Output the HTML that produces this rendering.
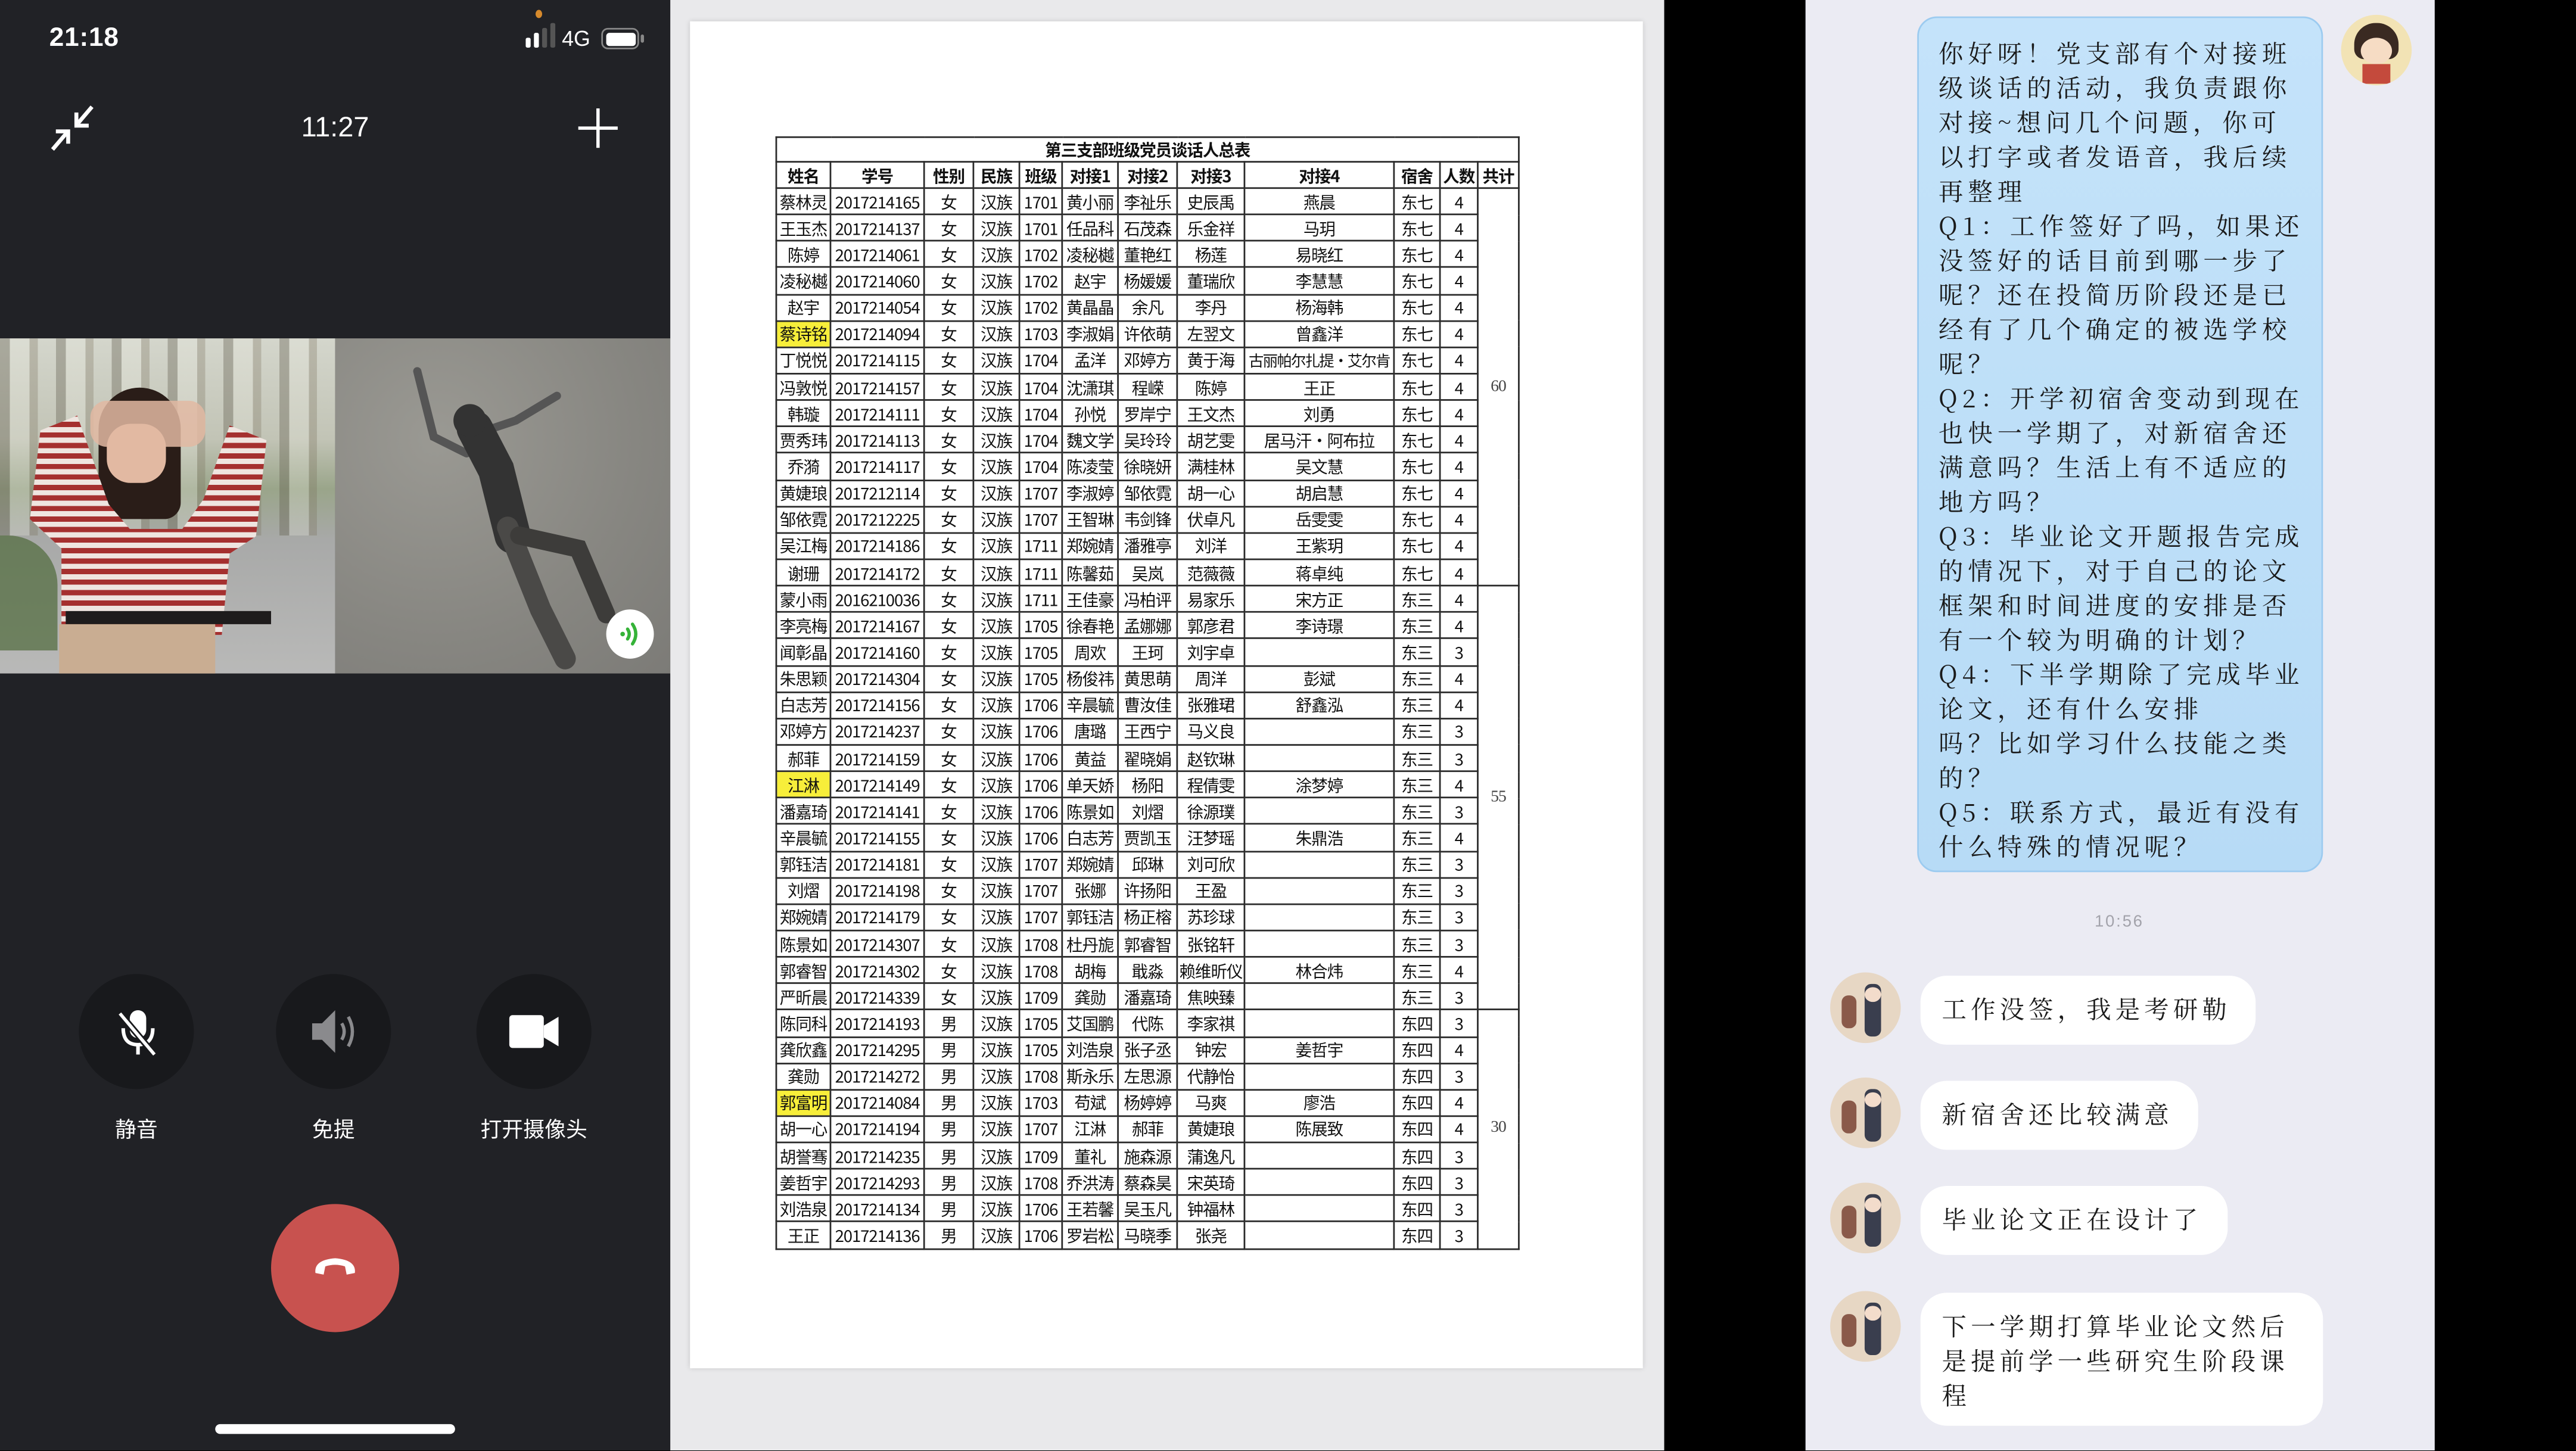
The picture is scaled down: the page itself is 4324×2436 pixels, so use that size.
<!DOCTYPE html>
<html><head><meta charset="utf-8">
<style>
*{margin:0;padding:0;box-sizing:border-box}
html,body{width:4324px;height:2436px;overflow:hidden;background:#000}
#w{position:absolute;left:0;top:0;width:1568px;height:883px;transform:scale(2.75765);transform-origin:0 0;font-family:"Liberation Sans","Noto Sans CJK SC",sans-serif;overflow:hidden;background:#000}
.ab{position:absolute}
#phone{left:0;top:0;width:408px;height:883px;background:#212226;color:#fff}
#mid{left:408px;top:0;width:605px;height:883px;background:#e9e9eb}
#paper{left:420px;top:13px;width:580px;height:820px;background:#fff;box-shadow:0 0 3px rgba(0,0,0,.15)}
table{position:absolute;left:472px;top:83px;width:452px;border-collapse:collapse;table-layout:fixed;font-family:"Noto Sans CJK SC",sans-serif;color:#111}
td{border:1px solid #2a2a2a;padding:0;text-align:center;font-size:10px;line-height:14px;height:16.15px;white-space:nowrap;overflow:hidden;letter-spacing:-0.4px}
tr.t td{height:15px;font-weight:bold;font-size:10px}
tr.h td{height:16px;font-weight:bold;font-size:10px}
td.y{background:#f7ee3a}
td.s{font-family:"Liberation Serif",serif;font-size:10px;color:#444;border-top:1px solid #2a2a2a}
#chat{left:1099px;top:0;width:383px;height:883px;background:#ebebf3}
.k{font-family:"Noto Serif CJK SC","Noto Sans CJK SC",serif;color:#1a1a1a}
.bub{background:#fff;border-radius:16px;position:absolute;left:1169px;font-size:15px;letter-spacing:2.6px;line-height:21px;padding:0 13px}
.av{position:absolute;left:1114px;width:43px;height:43px;border-radius:50%;background:#e7d7c4;overflow:hidden}
.av i{position:absolute;display:block}
.btn{position:absolute;width:70px;height:70px;border-radius:50%;background:#18191c;top:593px}
.lbl{position:absolute;top:677px;font-size:13px;width:120px;text-align:center;color:#fff}
</style></head><body><div id="w">

<div id="phone" class="ab">
  <div class="ab" style="left:30px;top:15px;font-size:16px;font-weight:bold;letter-spacing:.3px">21:18</div>
  <div class="ab" style="left:326px;top:6px;width:4px;height:5px;border-radius:50%;background:#d68a2c"></div>
  <div class="ab" style="left:320px;top:23px;width:3px;height:6px;background:#fff;border-radius:1px"></div>
  <div class="ab" style="left:325px;top:20px;width:3px;height:9px;background:#fff;border-radius:1px"></div>
  <div class="ab" style="left:330px;top:17px;width:3px;height:12px;background:#555;border-radius:1px"></div>
  <div class="ab" style="left:335px;top:14px;width:3px;height:15px;background:#555;border-radius:1px"></div>
  <div class="ab" style="left:342px;top:16px;font-size:13px">4G</div>
  <div class="ab" style="left:366px;top:17px;width:23px;height:13px;border:1.5px solid #888;border-radius:4px"></div>
  <div class="ab" style="left:368.5px;top:19.5px;width:18px;height:8px;background:#fff;border-radius:2px"></div>
  <div class="ab" style="left:390px;top:21px;width:2px;height:5px;background:#888;border-radius:1px"></div>
  <svg class="ab" style="left:0;top:0" width="80" height="100" viewBox="0 0 80 100"><g stroke="#fff" stroke-width="2.4" fill="none" stroke-linecap="butt"><path d="M56 65 L47.5 75"/><path d="M46.5 68.5 V76.5 H54"/><path d="M32 91 L40.5 81"/><path d="M34 80 H41.5 V87.5"/></g></svg>
  <div class="ab" style="left:0;width:408px;top:68px;text-align:center;font-size:17px">11:27</div>
  <div class="ab" style="left:352px;top:77px;width:24px;height:2.4px;background:#fff"></div>
  <div class="ab" style="left:362.8px;top:66px;width:2.4px;height:24px;background:#fff"></div>

  <!-- left video -->
  <div class="ab" style="left:0;top:206px;width:204px;height:204px;overflow:hidden;background:linear-gradient(180deg,#d4d6cc 0%,#c2c4b6 30%,#9aa58a 45%,#a8a9a8 60%,#b9b9b8 100%)">
    <div class="ab" style="left:0;top:0;width:204px;height:120px;background:repeating-linear-gradient(90deg,rgba(90,85,70,.35) 0 6px,rgba(240,240,230,.25) 6px 18px,rgba(120,110,90,.3) 18px 23px,transparent 23px 34px)"></div>
    <div class="ab" style="left:0;top:120px;width:35px;height:70px;background:#4e6a3a;opacity:.7;border-radius:0 30px 0 0"></div>
    <div class="ab" style="left:60px;top:30px;width:50px;height:80px;background:#2a1d18;border-radius:25px 25px 10px 10px"></div>
    <div class="ab" style="left:65px;top:52px;width:36px;height:36px;background:#e2b9a2;border-radius:40%"></div>
    <div class="ab" style="left:15px;top:38px;width:160px;height:150px;background:repeating-linear-gradient(180deg,#a5302f 0 3.2px,#efe5e0 3.2px 6.4px);clip-path:polygon(6% 12%,20% 6%,32% 42%,40% 52%,60% 52%,68% 40%,78% 10%,92% 16%,88% 55%,78% 62%,75% 95%,14% 95%,14% 60%,2% 48%)"></div>
    <div class="ab" style="left:55px;top:38px;width:70px;height:28px;background:#e2b9a2;border-radius:10px;opacity:.85"></div>
    <div class="ab" style="left:40px;top:166px;width:125px;height:8px;background:#1e1c1c"></div>
    <div class="ab" style="left:36px;top:174px;width:95px;height:40px;background:#c9ad92"></div>
  </div>
  <!-- right video -->
  <div class="ab" style="left:204px;top:206px;width:204px;height:204px;overflow:hidden;background:radial-gradient(ellipse at 30% 30%,#9a9993,#878681 60%,#7c7b77)">
    <svg class="ab" style="left:0;top:0" width="204" height="204" viewBox="0 0 204 204"><g fill="none" stroke-linecap="round"><path d="M50 20 L60 60 L80 70" stroke="#555" stroke-width="5"/><path d="M135 35 L110 50 L95 55" stroke="#555" stroke-width="5"/><path d="M85 55 L98 80 L108 120" stroke-width="22" stroke="#333"/><path d="M105 115 L125 165 L140 195" stroke-width="13" stroke="#4a4947"/><path d="M112 120 L148 128 L165 168" stroke-width="11" stroke="#3d3c3a"/></g><circle cx="82" cy="50" r="10" fill="#333"/></svg>
  </div>
  <div class="ab" style="left:369px;top:371px;width:29px;height:30px;border-radius:50%;background:#fff"></div>
  <svg class="ab" style="left:374px;top:376px" width="20" height="20" viewBox="0 0 20 20"><g fill="none" stroke="#35b338" stroke-width="2" stroke-linecap="round"><path d="M8 7 q2 3 0 6"/><path d="M11 4 q4 6 0 12"/></g><circle cx="5" cy="10" r="1.4" fill="#35b338"/></svg>

  <div class="btn" style="left:48px"></div>
  <div class="btn" style="left:168px"></div>
  <div class="btn" style="left:290px"></div>
  <svg class="ab" style="left:70px;top:614px" width="28" height="30" viewBox="0 0 28 30"><rect x="9" y="1" width="10" height="17" rx="5" fill="#fff"/><path d="M5 12 q0 10 9 10 q9 0 9 -10" fill="none" stroke="#fff" stroke-width="2.2"/><path d="M14 22 v6" stroke="#fff" stroke-width="2.2"/><path d="M3 3 L24 28" stroke="#18191c" stroke-width="4"/><path d="M3 3 L24 28" stroke="#fff" stroke-width="2"/></svg>
  <svg class="ab" style="left:188px;top:614px" width="30" height="28" viewBox="0 0 30 28"><path d="M2 9 h6 l8 -8 v26 l-8 -8 h-6z" fill="#8a8a8d"/><path d="M20 9 q3 5 0 10" fill="none" stroke="#8a8a8d" stroke-width="2"/><path d="M24 5 q5 9 0 18" fill="none" stroke="#8a8a8d" stroke-width="2"/></svg>
  <div class="ab" style="left:310px;top:618px;width:21px;height:20px;background:#fff;border-radius:2px"></div>
  <div class="ab" style="left:331px;top:619px;width:9px;height:18px;background:#fff;clip-path:polygon(0 30%,100% 0,100% 100%,0 70%)"></div>
  <div class="lbl" style="left:23px">静音</div>
  <div class="lbl" style="left:143px">免提</div>
  <div class="lbl" style="left:265px">打开摄像头</div>
  <div class="ab" style="left:165px;top:733px;width:78px;height:78px;border-radius:50%;background:#c8524f"></div>
  <svg class="ab" style="left:190px;top:762px" width="28" height="16" viewBox="0 0 28 16"><path d="M2 13 Q1 5 14 4 Q27 5 26 13 L21 14 L20 9 Q14 7 8 9 L7 14z" fill="#fff"/></svg>
  <div class="ab" style="left:131px;top:867px;width:146px;height:6px;border-radius:3px;background:#fff"></div>
</div>

<div id="mid" class="ab"></div>
<div id="paper" class="ab"></div>
<table>
<colgroup><col style="width:33px"><col style="width:57px"><col style="width:30px"><col style="width:28px"><col style="width:26px"><col style="width:34px"><col style="width:36px"><col style="width:41px"><col style="width:91px"><col style="width:28px"><col style="width:23px"><col style="width:25px"></colgroup>
<tr class="t"><td colspan="12">第三支部班级党员谈话人总表</td></tr>
<tr class="h"><td>姓名</td><td>学号</td><td>性别</td><td>民族</td><td>班级</td><td>对接1</td><td>对接2</td><td>对接3</td><td>对接4</td><td>宿舍</td><td>人数</td><td>共计</td></tr>
<tr><td>蔡林灵</td><td>2017214165</td><td>女</td><td>汉族</td><td>1701</td><td>黄小丽</td><td>李祉乐</td><td>史辰禹</td><td>燕晨</td><td>东七</td><td>4</td><td class="s" rowspan="15">60</td></tr>
<tr><td>王玉杰</td><td>2017214137</td><td>女</td><td>汉族</td><td>1701</td><td>任品科</td><td>石茂森</td><td>乐金祥</td><td>马玥</td><td>东七</td><td>4</td></tr>
<tr><td>陈婷</td><td>2017214061</td><td>女</td><td>汉族</td><td>1702</td><td>凌秘樾</td><td>董艳红</td><td>杨莲</td><td>易晓红</td><td>东七</td><td>4</td></tr>
<tr><td>凌秘樾</td><td>2017214060</td><td>女</td><td>汉族</td><td>1702</td><td>赵宇</td><td>杨媛媛</td><td>董瑞欣</td><td>李慧慧</td><td>东七</td><td>4</td></tr>
<tr><td>赵宇</td><td>2017214054</td><td>女</td><td>汉族</td><td>1702</td><td>黄晶晶</td><td>余凡</td><td>李丹</td><td>杨海韩</td><td>东七</td><td>4</td></tr>
<tr><td class="y">蔡诗铭</td><td>2017214094</td><td>女</td><td>汉族</td><td>1703</td><td>李淑娟</td><td>许依萌</td><td>左翌文</td><td>曾鑫洋</td><td>东七</td><td>4</td></tr>
<tr><td>丁悦悦</td><td>2017214115</td><td>女</td><td>汉族</td><td>1704</td><td>孟洋</td><td>邓婷方</td><td>黄于海</td><td style="font-size:9.2px;letter-spacing:-0.6px">古丽帕尔扎提·艾尔肯</td><td>东七</td><td>4</td></tr>
<tr><td>冯敦悦</td><td>2017214157</td><td>女</td><td>汉族</td><td>1704</td><td>沈潇琪</td><td>程嵘</td><td>陈婷</td><td>王正</td><td>东七</td><td>4</td></tr>
<tr><td>韩璇</td><td>2017214111</td><td>女</td><td>汉族</td><td>1704</td><td>孙悦</td><td>罗岸宁</td><td>王文杰</td><td>刘勇</td><td>东七</td><td>4</td></tr>
<tr><td>贾秀玮</td><td>2017214113</td><td>女</td><td>汉族</td><td>1704</td><td>魏文学</td><td>吴玲玲</td><td>胡艺雯</td><td>居马汗·阿布拉</td><td>东七</td><td>4</td></tr>
<tr><td>乔漪</td><td>2017214117</td><td>女</td><td>汉族</td><td>1704</td><td>陈凌莹</td><td>徐晓妍</td><td>满桂林</td><td>吴文慧</td><td>东七</td><td>4</td></tr>
<tr><td>黄婕琅</td><td>2017212114</td><td>女</td><td>汉族</td><td>1707</td><td>李淑婷</td><td>邹依霓</td><td>胡一心</td><td>胡启慧</td><td>东七</td><td>4</td></tr>
<tr><td>邹依霓</td><td>2017212225</td><td>女</td><td>汉族</td><td>1707</td><td>王智琳</td><td>韦剑锋</td><td>伏卓凡</td><td>岳雯雯</td><td>东七</td><td>4</td></tr>
<tr><td>吴江梅</td><td>2017214186</td><td>女</td><td>汉族</td><td>1711</td><td>郑婉婧</td><td>潘雅亭</td><td>刘洋</td><td>王紫玥</td><td>东七</td><td>4</td></tr>
<tr><td>谢珊</td><td>2017214172</td><td>女</td><td>汉族</td><td>1711</td><td>陈馨茹</td><td>吴岚</td><td>范薇薇</td><td>蒋卓纯</td><td>东七</td><td>4</td></tr>
<tr><td>蒙小雨</td><td>2016210036</td><td>女</td><td>汉族</td><td>1711</td><td>王佳豪</td><td>冯柏评</td><td>易家乐</td><td>宋方正</td><td>东三</td><td>4</td><td class="s" rowspan="16">55</td></tr>
<tr><td>李亮梅</td><td>2017214167</td><td>女</td><td>汉族</td><td>1705</td><td>徐春艳</td><td>孟娜娜</td><td>郭彦君</td><td>李诗璟</td><td>东三</td><td>4</td></tr>
<tr><td>闻彰晶</td><td>2017214160</td><td>女</td><td>汉族</td><td>1705</td><td>周欢</td><td>王珂</td><td>刘宇卓</td><td></td><td>东三</td><td>3</td></tr>
<tr><td>朱思颖</td><td>2017214304</td><td>女</td><td>汉族</td><td>1705</td><td>杨俊祎</td><td>黄思萌</td><td>周洋</td><td>彭斌</td><td>东三</td><td>4</td></tr>
<tr><td>白志芳</td><td>2017214156</td><td>女</td><td>汉族</td><td>1706</td><td>辛晨毓</td><td>曹汝佳</td><td>张雅珺</td><td>舒鑫泓</td><td>东三</td><td>4</td></tr>
<tr><td>邓婷方</td><td>2017214237</td><td>女</td><td>汉族</td><td>1706</td><td>唐璐</td><td>王西宁</td><td>马义良</td><td></td><td>东三</td><td>3</td></tr>
<tr><td>郝菲</td><td>2017214159</td><td>女</td><td>汉族</td><td>1706</td><td>黄益</td><td>翟晓娟</td><td>赵钦琳</td><td></td><td>东三</td><td>3</td></tr>
<tr><td class="y">江淋</td><td>2017214149</td><td>女</td><td>汉族</td><td>1706</td><td>单天娇</td><td>杨阳</td><td>程倩雯</td><td>涂梦婷</td><td>东三</td><td>4</td></tr>
<tr><td>潘嘉琦</td><td>2017214141</td><td>女</td><td>汉族</td><td>1706</td><td>陈景如</td><td>刘熠</td><td>徐源璞</td><td></td><td>东三</td><td>3</td></tr>
<tr><td>辛晨毓</td><td>2017214155</td><td>女</td><td>汉族</td><td>1706</td><td>白志芳</td><td>贾凯玉</td><td>汪梦瑶</td><td>朱鼎浩</td><td>东三</td><td>4</td></tr>
<tr><td>郭钰洁</td><td>2017214181</td><td>女</td><td>汉族</td><td>1707</td><td>郑婉婧</td><td>邱琳</td><td>刘可欣</td><td></td><td>东三</td><td>3</td></tr>
<tr><td>刘熠</td><td>2017214198</td><td>女</td><td>汉族</td><td>1707</td><td>张娜</td><td>许扬阳</td><td>王盈</td><td></td><td>东三</td><td>3</td></tr>
<tr><td>郑婉婧</td><td>2017214179</td><td>女</td><td>汉族</td><td>1707</td><td>郭钰洁</td><td>杨正榕</td><td>苏珍球</td><td></td><td>东三</td><td>3</td></tr>
<tr><td>陈景如</td><td>2017214307</td><td>女</td><td>汉族</td><td>1708</td><td>杜丹旎</td><td>郭睿智</td><td>张铭轩</td><td></td><td>东三</td><td>3</td></tr>
<tr><td>郭睿智</td><td>2017214302</td><td>女</td><td>汉族</td><td>1708</td><td>胡梅</td><td>戢淼</td><td>赖维昕仪</td><td>林合炜</td><td>东三</td><td>4</td></tr>
<tr><td>严昕晨</td><td>2017214339</td><td>女</td><td>汉族</td><td>1709</td><td>龚勋</td><td>潘嘉琦</td><td>焦映臻</td><td></td><td>东三</td><td>3</td></tr>
<tr><td>陈同科</td><td>2017214193</td><td>男</td><td>汉族</td><td>1705</td><td>艾国鹏</td><td>代陈</td><td>李家祺</td><td></td><td>东四</td><td>3</td><td class="s" rowspan="9">30</td></tr>
<tr><td>龚欣鑫</td><td>2017214295</td><td>男</td><td>汉族</td><td>1705</td><td>刘浩泉</td><td>张子丞</td><td>钟宏</td><td>姜哲宇</td><td>东四</td><td>4</td></tr>
<tr><td>龚勋</td><td>2017214272</td><td>男</td><td>汉族</td><td>1708</td><td>斯永乐</td><td>左思源</td><td>代静怡</td><td></td><td>东四</td><td>3</td></tr>
<tr><td class="y">郭富明</td><td>2017214084</td><td>男</td><td>汉族</td><td>1703</td><td>苟斌</td><td>杨婷婷</td><td>马爽</td><td>廖浩</td><td>东四</td><td>4</td></tr>
<tr><td>胡一心</td><td>2017214194</td><td>男</td><td>汉族</td><td>1707</td><td>江淋</td><td>郝菲</td><td>黄婕琅</td><td>陈展致</td><td>东四</td><td>4</td></tr>
<tr><td>胡誉骞</td><td>2017214235</td><td>男</td><td>汉族</td><td>1709</td><td>董礼</td><td>施森源</td><td>蒲逸凡</td><td></td><td>东四</td><td>3</td></tr>
<tr><td>姜哲宇</td><td>2017214293</td><td>男</td><td>汉族</td><td>1708</td><td>乔洪涛</td><td>蔡森昊</td><td>宋英琦</td><td></td><td>东四</td><td>3</td></tr>
<tr><td>刘浩泉</td><td>2017214134</td><td>男</td><td>汉族</td><td>1706</td><td>王若馨</td><td>吴玉凡</td><td>钟福林</td><td></td><td>东四</td><td>3</td></tr>
<tr><td>王正</td><td>2017214136</td><td>男</td><td>汉族</td><td>1706</td><td>罗岩松</td><td>马晓季</td><td>张尧</td><td></td><td>东四</td><td>3</td></tr>
</table>

<div id="chat" class="ab"></div>
<div class="ab k" style="left:1167px;top:10px;width:247px;height:521px;border-radius:12px;background:linear-gradient(180deg,#c4e3fa,#b7dbf6);border:1.5px solid #9ccbf0;padding:11px 0 0 12px;font-size:15px;line-height:21px;letter-spacing:2.9px;white-space:nowrap">你好呀！党支部有个对接班<br>级谈话的活动，我负责跟你<br>对接~想问几个问题，你可<br>以打字或者发语音，我后续<br>再整理<br>Q1：工作签好了吗，如果还<br>没签好的话目前到哪一步了<br>呢？还在投简历阶段还是已<br>经有了几个确定的被选学校<br>呢？<br>Q2：开学初宿舍变动到现在<br>也快一学期了，对新宿舍还<br>满意吗？生活上有不适应的<br>地方吗？<br>Q3：毕业论文开题报告完成<br>的情况下，对于自己的论文<br>框架和时间进度的安排是否<br>有一个较为明确的计划？<br>Q4：下半学期除了完成毕业<br>论文，还有什么安排<br>吗？比如学习什么技能之类<br>的？<br>Q5：联系方式，最近有没有<br>什么特殊的情况呢？</div>
<div class="ab" style="left:1425px;top:9px;width:43px;height:43px;border-radius:50%;background:#f2e3b5;overflow:hidden"><div class="ab" style="left:8px;top:5px;width:27px;height:22px;border-radius:13px 13px 6px 6px;background:#3a2a22"></div><div class="ab" style="left:12px;top:14px;width:19px;height:16px;border-radius:50%;background:#f6dcc4"></div><div class="ab" style="left:13px;top:30px;width:17px;height:12px;background:#c44a3c"></div></div>
<div class="ab" style="left:1260px;top:556px;width:60px;text-align:center;font-size:10px;color:#a3a3ab;letter-spacing:1px">10:56</div>

<div class="bub k" style="top:594px;height:42px;width:204px;padding-top:10px">工作没签，我是考研勒</div>
<div class="bub k" style="top:658px;height:42px;width:169px;padding-top:10px">新宿舍还比较满意</div>
<div class="bub k" style="top:722px;height:42px;width:187px;padding-top:10px">毕业论文正在设计了</div>
<div class="bub k" style="top:787px;height:81px;width:245px;padding-top:10px;line-height:21px">下一学期打算毕业论文然后<br>是提前学一些研究生阶段课<br>程</div>
<div class="av" style="top:592px"><i style="left:7px;top:14px;width:9px;height:20px;background:#8a5a4a;border-radius:4px"></i><i style="left:21px;top:7px;width:10px;height:32px;background:#3a3e4e;border-radius:4px"></i><i style="left:21px;top:9px;width:10px;height:9px;background:#f3dccb;border-radius:50%"></i></div>
<div class="av" style="top:656px"><i style="left:7px;top:14px;width:9px;height:20px;background:#8a5a4a;border-radius:4px"></i><i style="left:21px;top:7px;width:10px;height:32px;background:#3a3e4e;border-radius:4px"></i><i style="left:21px;top:9px;width:10px;height:9px;background:#f3dccb;border-radius:50%"></i></div>
<div class="av" style="top:720px"><i style="left:7px;top:14px;width:9px;height:20px;background:#8a5a4a;border-radius:4px"></i><i style="left:21px;top:7px;width:10px;height:32px;background:#3a3e4e;border-radius:4px"></i><i style="left:21px;top:9px;width:10px;height:9px;background:#f3dccb;border-radius:50%"></i></div>
<div class="av" style="top:786px"><i style="left:7px;top:14px;width:9px;height:20px;background:#8a5a4a;border-radius:4px"></i><i style="left:21px;top:7px;width:10px;height:32px;background:#3a3e4e;border-radius:4px"></i><i style="left:21px;top:9px;width:10px;height:9px;background:#f3dccb;border-radius:50%"></i></div>

</div></body></html>
